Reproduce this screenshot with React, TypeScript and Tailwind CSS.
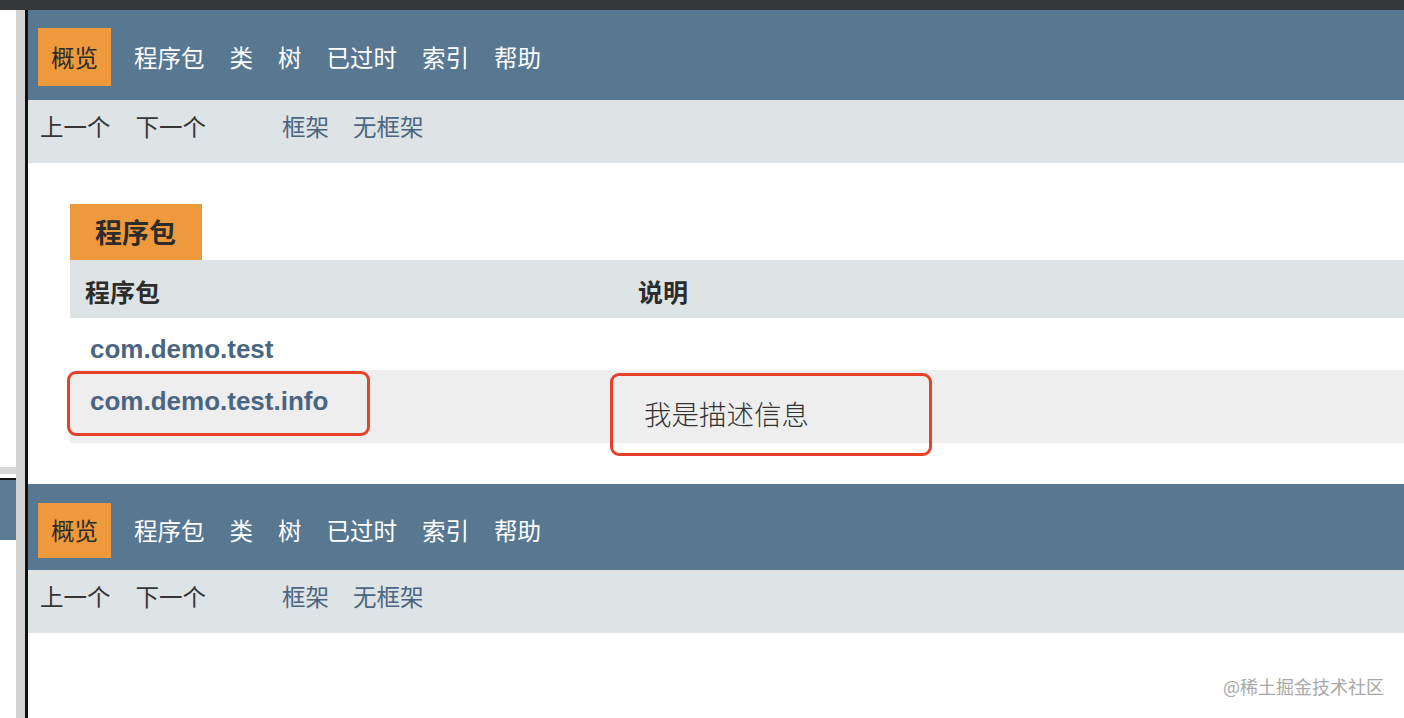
const cjk = { fontFamily: '"Noto Sans CJK SC", "Noto Sans", sans-serif' };
const latin = { fontFamily: '"Liberation Sans", Arial, "Noto Sans CJK SC", sans-serif' };

const navItems = ["程序包", "类", "树", "已过时", "索引", "帮助"];

function TopNav({ bottom }: { bottom?: boolean }) {
  return (
    <div>
      <div
        className={
          bottom
            ? "flex h-[86px] items-start bg-[#587892] pl-[10px] pt-[19px]"
            : "flex h-[90px] items-start bg-[#587892] pl-[10px] pt-[18px]"
        }
      >
        <div
          className={
            bottom
              ? "flex h-[55px] items-center bg-[#ee9a3c] px-[13px] text-[23.5px] text-[#2b2b2b]"
              : "flex h-[58px] items-center bg-[#ee9a3c] px-[13px] pt-[2px] text-[23.5px] text-[#2b2b2b]"
          }
        >
          概览
        </div>
        <ul
          className={
            bottom
              ? "ml-[23px] flex h-[55px] items-center gap-[25px] text-[23.5px] text-white"
              : "ml-[23px] flex h-[58px] items-center gap-[25px] pt-[2px] text-[23.5px] text-white"
          }
        >
          {navItems.map((n) => (
            <li key={n}>{n}</li>
          ))}
        </ul>
      </div>
      <div className="flex h-[63px] items-center bg-[#dee3e6] pb-[9px] pl-[12px] text-[23.5px]">
        <div className="flex gap-[25px] text-[#353535]">
          <span>上一个</span>
          <span>下一个</span>
        </div>
        <div className="ml-[76px] flex gap-[24px] text-[#4c6682]">
          <span>框架</span>
          <span>无框架</span>
        </div>
      </div>
    </div>
  );
}

export default function App() {
  return (
    <div className="relative flex h-[718px] w-[1404px] flex-col overflow-hidden bg-white" style={cjk}>
      <div className="h-[10px] shrink-0 bg-[#36373b]" />
      <div className="flex flex-1">
        {/* left frame */}
        <div className="flex w-[16px] flex-col">
          <div className="h-[457px]" />
          <div className="h-[7px] bg-[#d6d6d6]" />
          <div className="h-[4px]" />
          <div className="h-[2px] bg-[#111]" />
          <div className="h-[60px] bg-[#5b7a93]" />
        </div>
        <div className="w-[9px] bg-[#d3d3d3]" />
        <div className="w-[3px] bg-[#111]" />

        {/* main frame */}
        <div className="flex-1">
          <TopNav />

          <div className="h-[321px] pl-[42px] pt-[41px]">
            <div className="relative">
              <div className="flex h-[56px] w-[132px] items-center bg-[#ee9a3c] pl-[25px] text-[27px] font-bold text-[#2c2c2c]">
                程序包
              </div>
              <div className="flex h-[58px] bg-[#dee3e6] pt-[16px] text-[25px] font-bold leading-[30px] text-[#2c2c2c]">
                <div className="w-[554px] pl-[15px]">程序包</div>
                <div className="pl-[14px]">说明</div>
              </div>
              <div className="h-[52px] bg-white pl-[20px] pt-[16px] text-[26px] font-bold leading-[30px] text-[#4a6582]" style={latin}>
                com.demo.test
              </div>
              <div className="flex h-[73px] bg-[#eeeeef]">
                <div className="w-[554px] pl-[20px] pt-[16px] text-[26px] font-bold leading-[30px] text-[#4a6582]" style={latin}>
                  com.demo.test.info
                </div>
                <div className="pl-[20px] pt-[27px] text-[27.5px] font-light leading-[32px] text-[#333333]">
                  我是描述信息
                </div>
              </div>

              {/* red annotation boxes */}
              <div className="absolute left-[-3px] top-[167px] h-[65px] w-[303px] rounded-[9px] border-[3.5px] border-[#e8412a]" />
              <div className="absolute left-[540px] top-[169px] h-[83px] w-[322px] rounded-[9px] border-[3.5px] border-[#e8412a]" />
            </div>
          </div>

          <TopNav bottom />
        </div>
      </div>

      <div className="absolute bottom-[18px] right-[20px] text-[18px] text-[#a8a8a8]">@稀土掘金技术社区</div>
    </div>
  );
}
